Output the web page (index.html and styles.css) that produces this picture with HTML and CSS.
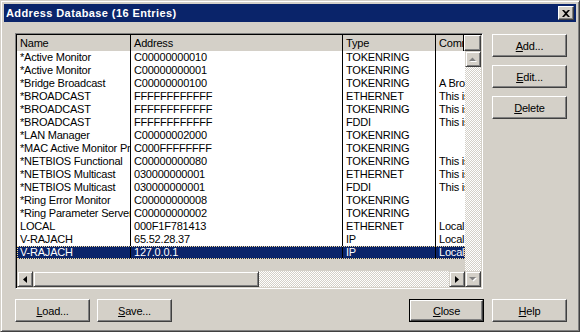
FILE: index.html
```html
<!DOCTYPE HTML>
<html>
<head>
<meta charset="UTF-8">
<title>Address Database</title>
<link rel="stylesheet" href="styles.css">
</head>
<body>

<div class="window">
	<div class="titlebar">
		<span class="title">Address Database (16 Entries)</span>
		<div class="close-x">
			<svg width="8" height="7" viewBox="0 0 8 7"><path d="M0 0h2l2 2 2-2h2L5 3.5 8 7H6L4 5 2 7H0l3-3.5z" fill="#000"/></svg>
		</div>
	</div>

	<div class="content">
		<div class="main">
			<div class="listbox">
				<div class="header">
					<div class="hcell col-name">Name</div>
					<div class="hcell col-addr">Address</div>
					<div class="hcell col-type">Type</div>
					<div class="hcell col-comm">Comment</div>
					<div class="hcorner"></div>
				</div>
				<div class="list-body">
					<div class="list-left">
						<div class="rows">
							<div class="row"><span class="col-name">*Active Monitor</span><span class="col-addr">C00000000010</span><span class="col-type">TOKENRING</span><span class="col-comm"></span></div>
							<div class="row"><span class="col-name">*Active Monitor</span><span class="col-addr">C00000000001</span><span class="col-type">TOKENRING</span><span class="col-comm"></span></div>
							<div class="row"><span class="col-name">*Bridge Broadcast</span><span class="col-addr">C00000000100</span><span class="col-type">TOKENRING</span><span class="col-comm">A Broadcast address</span></div>
							<div class="row"><span class="col-name">*BROADCAST</span><span class="col-addr">FFFFFFFFFFFF</span><span class="col-type">ETHERNET</span><span class="col-comm">This is a broadcast</span></div>
							<div class="row"><span class="col-name">*BROADCAST</span><span class="col-addr">FFFFFFFFFFFF</span><span class="col-type">TOKENRING</span><span class="col-comm">This is a broadcast</span></div>
							<div class="row"><span class="col-name">*BROADCAST</span><span class="col-addr">FFFFFFFFFFFF</span><span class="col-type">FDDI</span><span class="col-comm">This is a broadcast</span></div>
							<div class="row"><span class="col-name">*LAN Manager</span><span class="col-addr">C00000002000</span><span class="col-type">TOKENRING</span><span class="col-comm"></span></div>
							<div class="row"><span class="col-name">*MAC Active Monitor Protocol</span><span class="col-addr">C000FFFFFFFF</span><span class="col-type">TOKENRING</span><span class="col-comm"></span></div>
							<div class="row"><span class="col-name">*NETBIOS Functional</span><span class="col-addr">C00000000080</span><span class="col-type">TOKENRING</span><span class="col-comm">This is a functional</span></div>
							<div class="row"><span class="col-name">*NETBIOS Multicast</span><span class="col-addr">030000000001</span><span class="col-type">ETHERNET</span><span class="col-comm">This is a multicast</span></div>
							<div class="row"><span class="col-name">*NETBIOS Multicast</span><span class="col-addr">030000000001</span><span class="col-type">FDDI</span><span class="col-comm">This is a multicast</span></div>
							<div class="row"><span class="col-name">*Ring Error Monitor</span><span class="col-addr">C00000000008</span><span class="col-type">TOKENRING</span><span class="col-comm"></span></div>
							<div class="row"><span class="col-name">*Ring Parameter Server</span><span class="col-addr">C00000000002</span><span class="col-type">TOKENRING</span><span class="col-comm"></span></div>
							<div class="row"><span class="col-name">LOCAL</span><span class="col-addr">000F1F781413</span><span class="col-type">ETHERNET</span><span class="col-comm">Local address</span></div>
							<div class="row"><span class="col-name">V-RAJACH</span><span class="col-addr">65.52.28.37</span><span class="col-type">IP</span><span class="col-comm">Local address</span></div>
							<div class="row selected"><span class="col-name">V-RAJACH</span><span class="col-addr">127.0.0.1</span><span class="col-type">IP</span><span class="col-comm">Local address</span></div>
						</div>
						<div class="rows-filler"></div>
						<div class="hscroll">
							<div class="sbtn">
								<svg width="4" height="7" viewBox="0 0 4 7"><path d="M4 0v7L0 3.5z" fill="#000"/></svg>
							</div>
							<div class="thumb"></div>
							<div class="track"></div>
							<div class="sbtn">
								<svg width="4" height="7" viewBox="0 0 4 7"><path d="M0 0v7l4-3.5z" fill="#000"/></svg>
							</div>
						</div>
					</div>
					<div class="vscroll">
						<div class="sbtn">
							<svg width="8" height="5" viewBox="0 0 8 5"><path d="M1 5h7L4.5 1.5z" fill="#fff"/><path d="M0 4h7L3.5 0.5z" fill="#808080"/></svg>
						</div>
						<div class="track"></div>
						<div class="sbtn">
							<svg width="8" height="5" viewBox="0 0 8 5"><path d="M1 1h7L4.5 4.5z" fill="#fff"/><path d="M0 0h7L3.5 3.5z" fill="#808080"/></svg>
						</div>
					</div>
				</div>
			</div>

			<div class="side">
				<div class="button"><span class="label"><span class="key">A</span>dd...</span></div>
				<div class="button"><span class="label"><span class="key">E</span>dit...</span></div>
				<div class="button"><span class="label"><span class="key">D</span>elete</span></div>
			</div>
		</div>

		<div class="footer">
			<div class="group left">
				<div class="button"><span class="label"><span class="key">L</span>oad...</span></div>
				<div class="button"><span class="label"><span class="key">S</span>ave...</span></div>
			</div>
			<div class="group right">
				<div class="default"><div class="button"><span class="label"><span class="key">C</span>lose</span></div></div>
				<div class="button"><span class="label"><span class="key">H</span>elp</span></div>
			</div>
		</div>
	</div>
</div>

</body>
</html>
```

FILE: styles.css
```css
/* *** Page *** */
body {
	margin: 0;
	background: #d4d0c8;
	font-family: "Liberation Sans", Arial, sans-serif;
	font-size: 11px;
	letter-spacing: -0.2px;
	color: #000;
}

/* *** Window frame *** */
.window {
	box-sizing: border-box;
	width: 580px;
	height: 332px;
	padding: 3px;
	border: 1px solid;
	border-color: #d4d0c8 #404040 #404040 #d4d0c8;
	box-shadow: inset 1px 1px #fff, inset -1px -1px #808080;
	background: #d4d0c8;
}

.titlebar {
	display: flex;
	align-items: center;
	justify-content: space-between;
	height: 18px;
	padding-left: 2px;
	background: #0a246a;
}

.title {
	color: #fff;
	font-weight: bold;
	font-size: 11px;
	letter-spacing: 0.4px;
}

.close-x {
	display: flex;
	align-items: center;
	justify-content: center;
	box-sizing: border-box;
	width: 16px;
	height: 14px;
	margin-right: 2px;
	background: #d4d0c8;
	border: 1px solid;
	border-color: #fff #404040 #404040 #fff;
	box-shadow: inset -1px -1px #808080;
}

/* *** Layout *** */
.content {
	padding: 11px 9px 0 11px;
}

.main {
	display: flex;
	gap: 9px;
}

.side {
	display: flex;
	flex-direction: column;
	gap: 8px;
	padding-top: 1px;
}

.footer {
	display: flex;
	justify-content: space-between;
	margin-top: 10px;
}

.group {
	display: flex;
	gap: 8px;
}

.group.left {
	gap: 7px;
}

/* *** Buttons *** */
.button {
	display: flex;
	align-items: center;
	justify-content: center;
	box-sizing: border-box;
	width: 75px;
	height: 23px;
	border: 1px solid;
	border-color: #fff #404040 #404040 #fff;
	box-shadow: inset -1px -1px #808080;
	background: #d4d0c8;
}

/* mnemonic letter, underlined like the Windows accelerator key */
.key {
	text-decoration: underline;
}

.default {
	border: 1px solid #000;
}

.default .button {
	width: 73px;
	height: 21px;
}

/* *** List view *** */
.listbox {
	display: flex;
	flex-direction: column;
	box-sizing: border-box;
	width: 468px;
	height: 256px;
	border: 1px solid;
	border-color: #808080 #fff #fff #808080;
	box-shadow: inset 1px 1px #000, inset -1px -1px #d4d0c8;
	padding: 1px;
	background: #d4d0c8;
}

.header {
	display: flex;
	height: 16px;
	flex-shrink: 0;
}

.hcell {
	box-sizing: border-box;
	padding-left: 3px;
	line-height: 16px;
	white-space: nowrap;
	overflow: hidden;
	border-right: 1px solid #000;
	background: #d4d0c8;
}

.hcorner {
	box-sizing: border-box;
	width: 17px;
	border: 1px solid;
	border-color: #fff #404040 #404040 #fff;
	box-shadow: inset -1px -1px #808080;
}

.col-name { width: 114px; }
.col-addr { width: 212px; }
.col-type { width: 93px; }
.col-comm { width: 28px; }

.list-body {
	display: flex;
	flex: 1;
	min-height: 0;
}

.list-left {
	display: flex;
	flex-direction: column;
	width: 448px;
}

.rows {
	background: #fff;
}

.row {
	display: flex;
	height: 13px;
	line-height: 13px;
}

.row span {
	box-sizing: border-box;
	padding-left: 3px;
	white-space: nowrap;
	overflow: hidden;
}

.row .col-name,
.row .col-addr,
.row .col-type {
	border-right: 1px solid #000;
}

.row .col-comm {
	width: 29px;
}

.row.selected {
	background: #0a246a;
	color: #fff;
	outline: 1px dotted #f5db95;
	outline-offset: -1px;
}

.rows-filler {
	flex: 1;
}

/* *** Scrollbars *** */
.sbtn {
	display: flex;
	align-items: center;
	justify-content: center;
	box-sizing: border-box;
	width: 16px;
	height: 16px;
	flex-shrink: 0;
	border: 1px solid;
	border-color: #d4d0c8 #404040 #404040 #d4d0c8;
	box-shadow: inset 1px 1px #fff, inset -1px -1px #808080;
	background: #d4d0c8;
}

.track {
	flex: 1;
	background: repeating-conic-gradient(#d4d0c8 0 25%, #fff 0 50%) 0 0 / 2px 2px;
}

.hscroll {
	display: flex;
	height: 16px;
}

.thumb {
	box-sizing: border-box;
	width: 226px;
	border: 1px solid;
	border-color: #d4d0c8 #404040 #404040 #d4d0c8;
	box-shadow: inset 1px 1px #fff, inset -1px -1px #808080;
	background: #d4d0c8;
}

.vscroll {
	display: flex;
	flex-direction: column;
	width: 16px;
}
```
